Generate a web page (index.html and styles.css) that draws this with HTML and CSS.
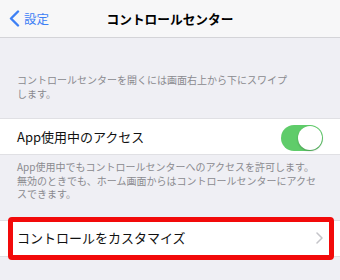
FILE: index.html
```html
<!DOCTYPE html>
<html lang="ja">
<head>
<meta charset="utf-8">
<link rel="stylesheet" href="styles.css">
</head>
<body>
<header class="nav">
  <div class="back">
    <svg class="back-chev" width="11" height="17" viewBox="0 0 11 17"><path d="M9 1.5 L2 8.5 L9 15.5" fill="none" stroke="#3d80f5" stroke-width="2.4" stroke-linecap="round" stroke-linejoin="round"/></svg>
    <span class="back-label">設定</span>
  </div>
  <div class="title">コントロールセンター</div>
  <div></div>
</header>
<p class="note note-top">コントロールセンターを開くには画面右上から下にスワイプ<br>します。</p>
<div class="cell">
  <span class="cell-label">App使用中のアクセス</span>
  <span class="toggle"><span class="knob"></span></span>
</div>
<p class="note note-bottom">App使用中でもコントロールセンターへのアクセスを許可します。<br>無効のときでも、ホーム画面からはコントロールセンターにアクセ<br>スできます。</p>
<div class="cell cell-link">
  <span class="cell-label">コントロールをカスタマイズ</span>
  <svg class="chev" width="7" height="12" viewBox="0 0 7 12"><path d="M1 1 L6 6 L1 11" fill="none" stroke="#c4c4c9" stroke-width="1.5" stroke-linecap="round" stroke-linejoin="round"/></svg>
  <span class="highlight"></span>
</div>
</body>
</html>
```
FILE: styles.css
```css
html, body {
  margin: 0;
  padding: 0;
}
body {
  width: 340px;
  height: 280px;
  overflow: hidden;
  background: #efeff4;
  font-family: "Noto Sans CJK JP", "Noto Sans", sans-serif;
  color: #111;
}
.nav {
  height: 37px;
  background: #f7f7f8;
  border-bottom: 1px solid #d4d4d8;
  display: grid;
  grid-template-columns: 1fr auto 1fr;
  align-items: center;
}
.back {
  display: flex;
  align-items: center;
  padding-left: 9px;
  gap: 4px;
}
.back-label {
  color: #3d80f5;
  font-size: 12.5px;
  line-height: 16px;
}
.title {
  font-size: 12.7px;
  font-weight: bold;
  color: #000;
  line-height: 16px;
}
.note {
  margin: 0;
  font-size: 10px;
  line-height: 13.5px;
  color: #8a8a8f;
  padding-left: 17px;
  padding-right: 10px;
}
.note-top {
  padding-top: 35px;
  padding-bottom: 18px;
}
.note-bottom {
  padding-top: 5px;
  padding-bottom: 19px;
}
.cell {
  position: relative;
  height: 35px;
  background: #fff;
  border-top: 1px solid #e0e0e4;
  border-bottom: 1px solid #e0e0e4;
  display: flex;
  align-items: center;
  justify-content: space-between;
  padding: 0 17px;
}
.cell-label {
  font-size: 13px;
  line-height: 16px;
  color: #111;
}
.toggle {
  width: 42px;
  height: 26px;
  border-radius: 13px;
  background: #5fcc6a;
  display: flex;
  align-items: center;
  justify-content: flex-end;
  padding: 0 1px;
  box-sizing: border-box;
  margin-top: 2px;
}
.knob {
  width: 24px;
  height: 24px;
  border-radius: 50%;
  background: #fff;
  box-shadow: 0 1px 2px rgba(0,0,0,0.25);
}
.cell-link .chev {
  margin-right: 0;
}
.highlight {
  position: absolute;
  top: -4px;
  bottom: -4px;
  left: 8px;
  right: 6px;
  border: 5px solid #f20a0a;
  border-radius: 4px;
}
```
